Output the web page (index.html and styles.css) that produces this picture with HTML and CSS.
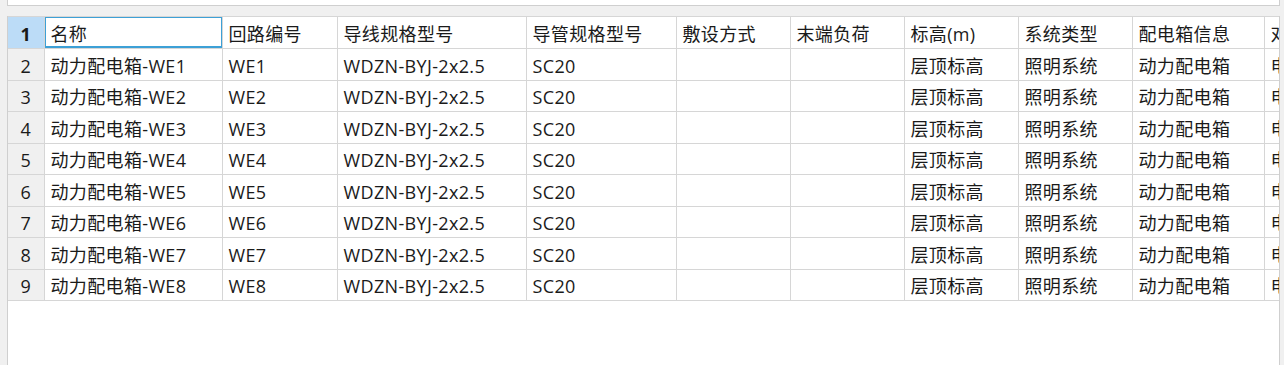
FILE: index.html
```html
<!DOCTYPE html>
<html lang="zh">
<head>
<meta charset="utf-8">
<title>回路表</title>
<link rel="stylesheet" href="styles.css">
</head>
<body>
<div class="topbox"></div>
<div class="sheet">
<table class="grid">
<colgroup>
<col class="c-h"><col class="c-name"><col class="c-code"><col class="c-wire"><col class="c-pipe"><col class="c-lay"><col class="c-load"><col class="c-elev"><col class="c-sys"><col class="c-box"><col class="c-last">
</colgroup>
<tr class="row">
<th class="rh rh-sel">1</th>
<td class="sel">名称</td><td>回路编号</td><td>导线规格型号</td><td>导管规格型号</td><td>敷设方式</td><td>末端负荷</td><td>标高(m)</td><td>系统类型</td><td>配电箱信息</td><td>对应配电箱</td>
</tr>
<tr class="row"><th class="rh">2</th><td>动力配电箱-WE1</td><td>WE1</td><td>WDZN-BYJ-2x2.5</td><td>SC20</td><td></td><td></td><td>层顶标高</td><td>照明系统</td><td>动力配电箱</td><td>电气照明</td></tr>
<tr class="row"><th class="rh">3</th><td>动力配电箱-WE2</td><td>WE2</td><td>WDZN-BYJ-2x2.5</td><td>SC20</td><td></td><td></td><td>层顶标高</td><td>照明系统</td><td>动力配电箱</td><td>电气照明</td></tr>
<tr class="row"><th class="rh">4</th><td>动力配电箱-WE3</td><td>WE3</td><td>WDZN-BYJ-2x2.5</td><td>SC20</td><td></td><td></td><td>层顶标高</td><td>照明系统</td><td>动力配电箱</td><td>电气照明</td></tr>
<tr class="row"><th class="rh">5</th><td>动力配电箱-WE4</td><td>WE4</td><td>WDZN-BYJ-2x2.5</td><td>SC20</td><td></td><td></td><td>层顶标高</td><td>照明系统</td><td>动力配电箱</td><td>电气照明</td></tr>
<tr class="row"><th class="rh">6</th><td>动力配电箱-WE5</td><td>WE5</td><td>WDZN-BYJ-2x2.5</td><td>SC20</td><td></td><td></td><td>层顶标高</td><td>照明系统</td><td>动力配电箱</td><td>电气照明</td></tr>
<tr class="row"><th class="rh">7</th><td>动力配电箱-WE6</td><td>WE6</td><td>WDZN-BYJ-2x2.5</td><td>SC20</td><td></td><td></td><td>层顶标高</td><td>照明系统</td><td>动力配电箱</td><td>电气照明</td></tr>
<tr class="row"><th class="rh">8</th><td>动力配电箱-WE7</td><td>WE7</td><td>WDZN-BYJ-2x2.5</td><td>SC20</td><td></td><td></td><td>层顶标高</td><td>照明系统</td><td>动力配电箱</td><td>电气照明</td></tr>
<tr class="row"><th class="rh">9</th><td>动力配电箱-WE8</td><td>WE8</td><td>WDZN-BYJ-2x2.5</td><td>SC20</td><td></td><td></td><td>层顶标高</td><td>照明系统</td><td>动力配电箱</td><td>电气照明</td></tr>
</table>
</div>
</body>
</html>
```

FILE: styles.css
```css
html, body {
  margin: 0;
  padding: 0;
  background: #f0f0f0;
  height: 365px;
  overflow: hidden;
  font-family: "Open Sans", "Noto Sans CJK SC", sans-serif;
  color: #1a1a1a;
}

.topbox {
  margin-left: 7px;
  width: 1271px;
  height: 5px;
  background: #ffffff;
  border: 1px solid #cfcfcf;
  border-top: none;
}

.sheet {
  margin-top: 10px;
  margin-left: 7px;
  width: 1271px;
  height: 349px;
  background: #ffffff;
  border-left: 1px solid #cfcfcf;
  border-right: 1px solid #cfcfcf;
  overflow: hidden;
}

.grid {
  border-collapse: collapse;
  table-layout: fixed;
  width: 1290px;
  font-size: 18px;
  letter-spacing: 0.35px;
}

.c-h { width: 36px; }
.c-name { width: 178px; }
.c-code { width: 115px; }
.c-wire { width: 189px; }
.c-pipe { width: 150px; }
.c-lay { width: 114px; }
.c-load { width: 114px; }
.c-elev { width: 114px; }
.c-sys { width: 114px; }
.c-box { width: 132px; }
.c-last { width: 134px; }

.row { height: 32px; }
.row:nth-child(odd) { height: 31px; }
.row:first-child { height: 32px; }

.grid td,
.grid th {
  border: 1px solid #d6d6d6;
  padding: 0 0 0 6px;
  white-space: nowrap;
  overflow: hidden;
  text-align: left;
  font-weight: normal;
  line-height: 20px;
  padding-top: 2px;
}

.grid .rh {
  background: #f0f0f0;
  text-align: center;
  padding-left: 0;
  border-left: none;
}

.grid .rh-sel {
  background: #bcdcf7;
  font-weight: bold;
}

.grid .sel {
  box-shadow: inset 0 0 0 1px #3da0d6, inset 0 -2px 0 #3da0d6;
}
```
